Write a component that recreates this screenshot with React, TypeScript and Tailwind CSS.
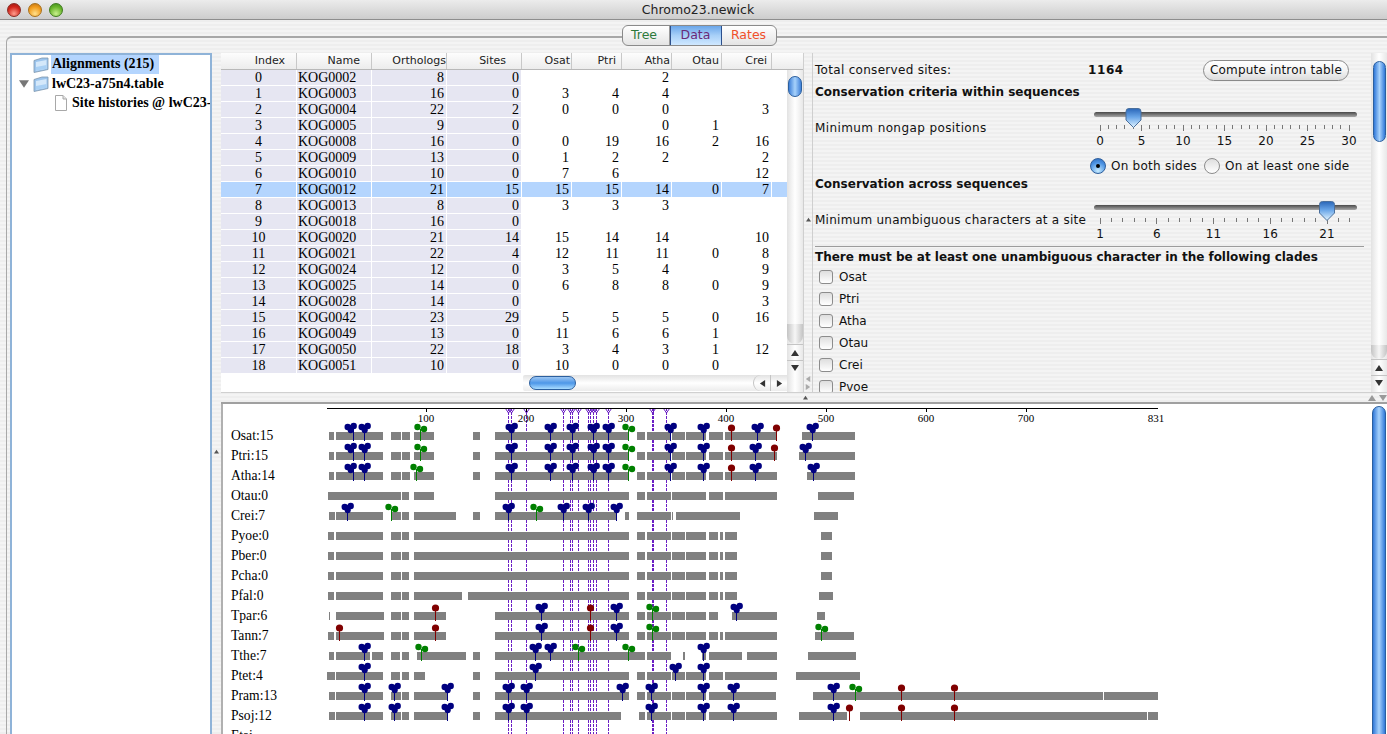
import React from 'react';

// ─── Data ─────────────────────────────────────────────────────────────────────

const TABLE_ROWS: (string | number)[][] = [
  [0, 'KOG0002', 8, 0, '', '', 2, '', ''],
  [1, 'KOG0003', 16, 0, 3, 4, 4, '', ''],
  [2, 'KOG0004', 22, 2, 0, 0, 0, '', 3],
  [3, 'KOG0005', 9, 0, '', '', 0, 1, ''],
  [4, 'KOG0008', 16, 0, 0, 19, 16, 2, 16],
  [5, 'KOG0009', 13, 0, 1, 2, 2, '', 2],
  [6, 'KOG0010', 10, 0, 7, 6, '', '', 12],
  [7, 'KOG0012', 21, 15, 15, 15, 14, 0, 7],
  [8, 'KOG0013', 8, 0, 3, 3, 3, '', ''],
  [9, 'KOG0018', 16, 0, '', '', '', '', ''],
  [10, 'KOG0020', 21, 14, 15, 14, 14, '', 10],
  [11, 'KOG0021', 22, 4, 12, 11, 11, 0, 8],
  [12, 'KOG0024', 12, 0, 3, 5, 4, '', 9],
  [13, 'KOG0025', 14, 0, 6, 8, 8, 0, 9],
  [14, 'KOG0028', 14, 0, '', '', '', '', 3],
  [15, 'KOG0042', 23, 29, 5, 5, 5, 0, 16],
  [16, 'KOG0049', 13, 0, 11, 6, 6, 1, ''],
  [17, 'KOG0050', 22, 18, 3, 4, 3, 1, 12],
  [18, 'KOG0051', 10, 0, 10, 0, 0, 0, ''],
];

const COLUMNS = [
  { label: 'Index', width: 'w-[76px]', head: 'pr-[11px]', cell: 'text-center' },
  { label: 'Name', width: 'w-[75px]', head: 'pr-[11px]', cell: 'text-left pl-[1px]' },
  { label: 'Orthologs', width: 'w-[75px]', head: 'pr-[0px]', cell: 'text-right pr-[2px]' },
  { label: 'Sites', width: 'w-[75px]', head: 'pr-[15px]', cell: 'text-right pr-[2px]' },
  { label: 'Osat', width: 'w-[50px]', head: 'pr-[1px]', cell: 'text-right pr-[2px]' },
  { label: 'Ptri', width: 'w-[50px]', head: 'pr-[5px]', cell: 'text-right pr-[2px]' },
  { label: 'Atha', width: 'w-[50px]', head: 'pr-[1px]', cell: 'text-right pr-[2px]' },
  { label: 'Otau', width: 'w-[50px]', head: 'pr-[2px]', cell: 'text-right pr-[2px]' },
  { label: 'Crei', width: 'w-[50px]', head: 'pr-[4px]', cell: 'text-right pr-[2px]' },
];

type Seg = [number, number];
// kind, stem x, optional head offset
type Pin = ['n' | 'g' | 'r', number, number?];

const HEAD: Seg[] = [[329, 334], [336, 383], [391, 401], [402, 410]];
const HEAD_P: Seg[] = [[328, 334], [336, 383], [391, 401], [402, 409]];
const MID: Seg[] = [[637, 645], [647, 671], [672, 685], [686, 706]];
const OSAT_PINS: Pin[] = [['n', 353, -3], ['n', 364], ['g', 420.5], ['n', 511], ['n', 550], ['n', 572], ['n', 593], ['n', 608], ['g', 628], ['n', 670], ['n', 703], ['r', 731]];

const TRACKS: { label: string; segs: Seg[]; pins: Pin[] }[] = [
  {
    label: 'Osat:15',
    segs: [...HEAD, [414, 434], [473, 480], [495, 629], ...MID, [709, 723], [725, 777], [802, 855]],
    pins: [...OSAT_PINS, ['n', 757], ['r', 776], ['n', 812]],
  },
  {
    label: 'Ptri:15',
    segs: [...HEAD, [414, 434], [473, 480], [495, 629], ...MID, [709, 723], [725, 777], [799, 855]],
    pins: [...OSAT_PINS, ['n', 755], ['r', 774], ['n', 805]],
  },
  {
    label: 'Atha:14',
    segs: [...HEAD, [414, 434], [473, 480], [495, 629], ...MID, [709, 723], [725, 777], [807, 855]],
    pins: [['n', 353, -3], ['n', 364], ['g', 416], ['n', 511], ['n', 550], ['n', 572], ['n', 593], ['n', 608], ['g', 628], ['n', 670], ['n', 703], ['r', 731], ['n', 755], ['n', 813]],
  },
  {
    label: 'Otau:0',
    segs: [[328, 401], [402, 409], [414, 434], [495, 629], [637, 645], [647, 671], [672, 706], [709, 723], [725, 777], [818, 854]],
    pins: [],
  },
  {
    label: 'Crei:7',
    segs: [[329, 335], [336, 383], [391, 401], [402, 409], [414, 456], [473, 480], [495, 616], [625, 629], [637, 671], [672, 673], [676, 740], [814, 838]],
    pins: [['n', 347], ['g', 391], ['n', 508], ['g', 536], ['n', 563], ['n', 588], ['n', 616]],
  },
  { label: 'Pyoe:0', segs: [...HEAD_P, [414, 629], ...MID, [709, 718], [720, 723], [725, 737], [821, 832]], pins: [] },
  { label: 'Pber:0', segs: [...HEAD_P, [414, 629], ...MID, [709, 718], [720, 723], [725, 737], [821, 832]], pins: [] },
  { label: 'Pcha:0', segs: [...HEAD_P, [414, 629], ...MID, [709, 718], [720, 723], [725, 737], [821, 832]], pins: [] },
  { label: 'Pfal:0', segs: [...HEAD_P, [414, 462], [468, 629], ...MID, [709, 718], [720, 723], [725, 737], [819, 833]], pins: [] },
  {
    label: 'Tpar:6',
    segs: [[329, 330], [336, 384], [391, 401], [402, 409], [414, 446], [495, 629], ...MID, [709, 718], [732, 777], [817, 825]],
    pins: [['r', 435], ['n', 541], ['r', 590], ['n', 616], ['g', 652], ['n', 736]],
  },
  {
    label: 'Tann:7',
    segs: [[328, 334], [336, 384], [391, 401], [402, 409], [414, 446], [495, 629], ...MID, [709, 718], [720, 723], [725, 777], [815, 854]],
    pins: [['r', 339], ['r', 435], ['n', 541], ['r', 590], ['n', 616], ['g', 652], ['g', 821]],
  },
  {
    label: 'Tthe:7',
    segs: [[329, 334], [336, 370], [372, 383], [391, 400], [402, 409], [417, 466], [473, 480], [495, 645], [647, 671], [683, 685], [702, 706], [709, 742], [747, 777], [808, 856]],
    pins: [['n', 364], ['g', 421], ['n', 535], ['n', 550], ['g', 578], ['g', 628], ['n', 703]],
  },
  {
    label: 'Ptet:4',
    segs: [[327, 335], [336, 383], [391, 400], [402, 409], [414, 425], [473, 480], [495, 629], ...MID, [709, 723], [725, 777], [796, 860]],
    pins: [['n', 364], ['n', 535], ['n', 675], ['n', 703]],
  },
  {
    label: 'Pram:13',
    segs: [[329, 335], [336, 383], [391, 401], [402, 409], [414, 447], [473, 480], [495, 629], ...MID, [709, 776], [813, 1103], [1104, 1158]],
    pins: [['n', 364], ['n', 394], ['n', 447], ['n', 508], ['n', 526], ['n', 622], ['n', 651], ['n', 703], ['n', 733], ['n', 833], ['g', 855], ['r', 901], ['r', 954]],
  },
  {
    label: 'Psoj:12',
    segs: [[329, 335], [336, 383], [391, 401], [402, 409], [414, 447], [473, 480], [495, 621], [639, 645], [647, 671], [672, 685], [686, 706], [709, 777], [799, 847], [860, 1147], [1148, 1158]],
    pins: [['n', 364], ['n', 394], ['n', 447], ['n', 508], ['n', 526], ['n', 651], ['n', 703], ['n', 733], ['n', 833], ['r', 849], ['r', 901], ['r', 954]],
  },
];

const SITE_LINES = [508, 511, 526, 563, 570, 572, 578, 588, 590, 593, 596, 608, 652, 666];
const AXIS_TICKS = [100, 200, 300, 400, 500, 600, 700];

const CLADES = ['Osat', 'Ptri', 'Atha', 'Otau', 'Crei', 'Pvoe'];

// ─── Small drawings ───────────────────────────────────────────────────────────

function Folder({ className }: { className?: string }) {
  return (
    <svg viewBox="0 0 16 16" className={className}>
      <path d="M1 3.5 L9 1 L15 1 L15 12.5 L1 15.5 Z" fill="#9cc4ec" stroke="#7d97ad" strokeWidth="0.8" />
      <path d="M3 5 L13.5 3 L13.5 11.8 L3 13.8 Z" fill="#d4e8fa" />
      <path d="M3 10 L13.5 8 L13.5 11.8 L3 13.8 Z" fill="#a9d0f4" />
    </svg>
  );
}

function DocIcon({ className }: { className?: string }) {
  return (
    <svg viewBox="0 0 12 16" className={className}>
      <path d="M0.5 0.5 H8 L11.5 4 V15.5 H0.5 Z" fill="#fff" stroke="#a8a8a8" />
      <path d="M8 0.5 V4 H11.5" fill="#e4e4e4" stroke="#a8a8a8" />
    </svg>
  );
}

function Arrow({ dir, className }: { dir: 'up' | 'down' | 'left' | 'right'; className?: string }) {
  const pts = { up: '4,1 8,7 0,7', down: '0,1 8,1 4,7', left: '7,0 7,8 1,4', right: '1,0 1,8 7,4' }[dir];
  return (
    <svg viewBox="0 0 8 8" className={className}>
      <polygon points={pts} fill="currentColor" />
    </svg>
  );
}

function SliderDrawing({ thumb, labels, ticks }: { thumb: number; labels: { x: number; t: string }[]; ticks: { x: number; major: boolean }[] }) {
  const gradId = `sliderThumb${Math.round(thumb)}`;
  return (
    <svg viewBox="1090 0 274 48" className="w-[274px] h-[48px] block shrink-0">
      <defs>
        <linearGradient id={gradId} x1="0" y1="0" x2="0" y2="1">
          <stop offset="0" stopColor="#2a66b8" />
          <stop offset="0.45" stopColor="#6aa6e8" />
          <stop offset="1" stopColor="#e2f4ff" />
        </linearGradient>
        <linearGradient id={`${gradId}t`} x1="0" y1="0" x2="0" y2="1">
          <stop offset="0" stopColor="#4a4a4a" />
          <stop offset="1" stopColor="#a8a8a8" />
        </linearGradient>
      </defs>
      <rect x="1094" y="10" width="263" height="5" rx="2.5" fill={`url(#${gradId}t)`} />
      {ticks.map((t) => (
        <line key={t.x} x1={t.x} x2={t.x} y1="22.5" y2={t.major ? 29 : 26.5} stroke="#777" strokeWidth="1" shapeRendering="crispEdges" />
      ))}
      <path
        d={`M${thumb - 7.5} 9.5 Q${thumb - 7.5} 6.5 ${thumb - 4.5} 6.5 H${thumb + 4.5} Q${thumb + 7.5} 6.5 ${thumb + 7.5} 9.5 V18 L${thumb} 25.5 L${thumb - 7.5} 18 Z`}
        fill={`url(#${gradId})`}
        stroke="#4a6f9c"
      />
      {labels.map((l) => (
        <text key={l.t} x={l.x} y="43" textAnchor="middle" fontSize="12" fill="#111" fontFamily="'DejaVu Sans', sans-serif">
          {l.t}
        </text>
      ))}
    </svg>
  );
}

function Pinhead({ pin, y }: { pin: Pin; y: number }) {
  const [kind, x0, dx = 0] = pin;
  const x = Math.floor(x0) + 0.5;
  const hx = x + dx;
  const color = kind === 'n' ? '#000080' : kind === 'g' ? '#008000' : '#800000';
  return (
    <g fill={color}>
      <line x1={x} x2={x} y1={y - 3} y2={y + 9} stroke={color} strokeWidth="1" shapeRendering="crispEdges" />
      {kind === 'n' && (
        <>
          <circle cx={hx - 2.8} cy={y - 5} r="3.2" />
          <circle cx={hx + 3.2} cy={y - 6} r="3.2" />
          <circle cx={hx + 0.2} cy={y - 4} r="3" />
          <circle cx={hx + 0.2} cy={y - 1.8} r="3" />
        </>
      )}
      {kind === 'g' && (
        <>
          <circle cx={x - 3} cy={y - 5} r="3.2" />
          <circle cx={x + 3.5} cy={y - 3} r="3.2" />
        </>
      )}
      {kind === 'r' && <circle cx={x} cy={y - 4} r="3.6" />}
    </g>
  );
}

// ─── Chart ────────────────────────────────────────────────────────────────────

function IntronChart() {
  return (
    <svg viewBox="223 404 1148 330" className="w-[1148px] h-[330px] block bg-white" fontFamily="'Liberation Serif', serif">
      {SITE_LINES.map((x) => (
        <g key={x} stroke="#6a1fc4" fill="none" shapeRendering="crispEdges">
          <line x1={x + 0.5} x2={x + 0.5} y1="408" y2="734" strokeWidth={x === 652 ? 2 : 1} strokeDasharray="3 1" />
          <polygon points={`${x - 2.5},408.5 ${x + 3.5},408.5 ${x + 0.5},413`} shapeRendering="auto" />
        </g>
      ))}
      <line x1="327" x2="1158" y1="408.5" y2="408.5" stroke="#000" shapeRendering="crispEdges" />
      {AXIS_TICKS.map((t) => (
        <g key={t}>
          <line x1={326.5 + t} x2={326.5 + t} y1="408" y2="412" stroke="#000" shapeRendering="crispEdges" />
          <text x={326 + t} y="422" textAnchor="middle" fontSize="11" fill="#000">{t}</text>
        </g>
      ))}
      <text x="1156" y="422" textAnchor="middle" fontSize="11" fill="#000">831</text>
      {TRACKS.map((tr, i) => {
        const y = 432 + i * 20;
        return (
          <g key={tr.label}>
            <text x="231" y={y + 8} fontSize="13.6" fill="#000">{tr.label}</text>
            {tr.segs.map(([a, b]) => (
              <rect key={a} x={a} y={y} width={b - a} height="8" fill="#808080" shapeRendering="crispEdges" />
            ))}
            {tr.pins.map((p) => (
              <Pinhead key={p[1]} pin={p} y={y} />
            ))}
          </g>
        );
      })}
      <text x="231" y="740" fontSize="13.6" fill="#000">Etai</text>
    </svg>
  );
}

// ─── Panels ───────────────────────────────────────────────────────────────────

function ScrollArrows({ pill }: { pill: string }) {
  return (
    <>
      <div className="flex-1" />
      <div className={`${pill} rounded-b-full bg-gradient-to-r from-[#c4c4c4] via-[#f6f6f6] to-[#c4c4c4]`} />
      <div className="h-[16px] flex items-center justify-center border-t border-[#c4c4c4] text-[#333]">
        <Arrow dir="up" className="w-[8px] h-[8px]" />
      </div>
      <div className="h-[15px] flex items-center justify-center border-t border-[#c4c4c4] text-[#333]">
        <Arrow dir="down" className="w-[8px] h-[8px]" />
      </div>
    </>
  );
}

function SiteTable() {
  return (
    <div className="w-[582px] shrink-0 bg-white flex flex-col overflow-hidden">
      <div className="flex h-[17px] shrink-0 border-b border-[#b8b8b8] bg-gradient-to-b from-[#fdfdfd] to-[#ececec] font-['DejaVu_Sans',sans-serif] text-[11px] leading-[16px] text-[#222]">
        {COLUMNS.map((c) => (
          <div key={c.label} className={`${c.width} ${c.head} shrink-0 text-right border-r border-[#c8c8c8] overflow-hidden`}>
            {c.label}
          </div>
        ))}
      </div>
      <div className="flex flex-1 min-h-0">
        <div className="w-[566px] shrink-0 flex flex-col">
          {TABLE_ROWS.map((row, i) => (
            <div key={i} className={`flex h-[16px] shrink-0 border-b border-white font-['Liberation_Serif',serif] text-[14px] leading-[15px] text-black ${i === 7 ? 'bg-[#b4d5fe]' : ''}`}>
              {COLUMNS.map((c, j) => (
                <div
                  key={c.label}
                  className={`${c.width} ${c.cell} shrink-0 border-r border-white ${j < 4 && i !== 7 ? 'bg-[#e6e6f2]' : ''}`}
                >
                  {row[j]}
                </div>
              ))}
            </div>
          ))}
          {/* Horizontal scrollbar */}
          <div className="flex h-[16px] mt-[1px] pl-[302px]">
            <div className="flex-1 flex items-center bg-gradient-to-b from-[#e2e2e2] via-white to-[#ececec] rounded-l-[2px]">
              <div className="ml-[6px] w-[47px] h-[14px] rounded-full border border-[#2b5f9e] bg-gradient-to-b from-[#9cc6f2] via-[#4d97e8] to-[#a9dcff]" />
              <div className="flex-1" />
              <div className="w-[17px] h-full flex items-center justify-center border-l border-[#c4c4c4] rounded-l-full text-[#333]">
                <Arrow dir="left" className="w-[7px] h-[7px]" />
              </div>
              <div className="w-[17px] h-full flex items-center justify-center border-l border-[#c4c4c4] text-[#333]">
                <Arrow dir="right" className="w-[7px] h-[7px]" />
              </div>
            </div>
          </div>
        </div>
        {/* Vertical scrollbar */}
        <div className="w-[16px] shrink-0 flex flex-col bg-gradient-to-r from-[#e2e2e2] via-white to-[#e8e8e8] pb-[17px] pt-[6px]">
          <div className="mx-[1px] h-[21px] rounded-full border border-[#2b5f9e] bg-gradient-to-r from-[#3e80d8] via-[#a7d2fb] to-[#3e80d8]" />
          <ScrollArrows pill="h-[20px]" />
        </div>
      </div>
    </div>
  );
}

const FORM_TEXT = "font-['DejaVu_Sans',sans-serif] text-[12px] text-[#111]";

function Radio({ on }: { on?: boolean }) {
  return on ? (
    <span className="w-[16px] h-[16px] rounded-full border border-[#2f5f9c] bg-[radial-gradient(circle_at_50%_85%,#c8ecff,#4d94e4_60%,#2a66b8)] flex items-center justify-center shrink-0">
      <span className="w-[4px] h-[4px] rounded-full bg-black" />
    </span>
  ) : (
    <span className="ml-[2px] w-[16px] h-[16px] rounded-full border border-[#8c8c8c] bg-gradient-to-b from-[#dedede] to-white shrink-0" />
  );
}

function ConservationForm() {
  const ticks1 = Array.from({ length: 31 }, (_, i) => ({ x: 1100 + i * 8.3, major: i % 5 === 0 }));
  const ticks2 = Array.from({ length: 23 }, (_, i) => ({ x: 1100 + i * 11.35, major: i % 5 === 0 }));
  const labels1 = [0, 5, 10, 15, 20, 25, 30].map((v) => ({ x: 1100 + v * 8.3, t: String(v) }));
  const labels2 = [1, 6, 11, 16, 21].map((v) => ({ x: 1100 + (v - 1) * 11.35, t: String(v) }));

  return (
    <div className={`w-[551px] shrink-0 flex flex-col overflow-hidden pl-[2px] ${FORM_TEXT}`}>
      <div className="flex items-center h-[24px] mt-[5px] shrink-0">
        <span className="w-[273px] shrink-0 tracking-[0.3px]">Total conserved sites:</span>
        <span className="font-bold text-[12px] tracking-[0.6px]">1164</span>
        <button className="ml-auto mr-[15px] w-[146px] h-[21px] rounded-full border border-[#8a8a8a] bg-gradient-to-b from-white via-[#f4f4f4] to-[#dcdcdc] text-[12px] leading-[18px] tracking-[0.2px]">
          Compute intron table
        </button>
      </div>
      <div className="h-[16px] mt-[2px] leading-[16px] font-bold text-[12px] whitespace-nowrap">Conservation criteria within sequences</div>
      <div className="flex items-start h-[48px] shrink-0 mt-[2px]">
        <span className="w-[275px] shrink-0 pt-[17px] tracking-[0.4px]">Minimum nongap positions</span>
        <SliderDrawing thumb={1133.5} ticks={ticks1} labels={labels1} />
      </div>
      <div className="flex items-center h-[20px] mt-[6px] pl-[275px] shrink-0 gap-[5px]">
        <Radio on />
        <span className="tracking-[0.25px]">On both sides</span>
        <Radio />
        <span className="tracking-[0.2px]">On at least one side</span>
      </div>
      <div className="h-[16px] leading-[16px] mt-[0px] font-bold text-[12px] tracking-[0px]">Conservation across sequences</div>
      <div className="flex items-start h-[48px] shrink-0 mt-[3px]">
        <span className="w-[275px] shrink-0 pt-[16px] tracking-[0.25px] whitespace-nowrap">Minimum unambiguous characters at a site</span>
        <SliderDrawing thumb={1327} ticks={ticks2} labels={labels2} />
      </div>
      <div className="mt-[3px] border-t border-[#9c9c9c]" />
      <div className="h-[18px] leading-[18px] mt-[1px] font-bold text-[12px] tracking-[-0.02px] whitespace-nowrap">
        There must be at least one unambiguous character in the following clades
      </div>
      <div className="flex flex-col pl-[4px]">
        {CLADES.map((c) => (
          <div key={c} className="flex items-center h-[22px] shrink-0 gap-[6px]">
            <span className="w-[14px] h-[14px] rounded-[3px] border border-[#8c8c8c] bg-gradient-to-b from-[#dedede] to-white shrink-0" />
            <span>{c}</span>
          </div>
        ))}
      </div>
    </div>
  );
}

// ─── App ──────────────────────────────────────────────────────────────────────

const STRIPES = 'bg-[repeating-linear-gradient(180deg,#eeeeee_0px,#eeeeee_2px,#f4f4f4_2px,#f4f4f4_4px)]';

export default function App() {
  return (
    <div className="w-[1387px] h-[734px] overflow-hidden flex flex-col bg-[#efefef]">
      {/* Title bar */}
      <div className="h-[20px] shrink-0 grid grid-cols-[1fr_auto_1fr] items-center border-b border-[#8e8e8e] bg-gradient-to-b from-[#ececec] to-[#cdcdcd]">
        <div className="flex items-center gap-[7px] pl-[7px]">
          <span className="w-[14px] h-[14px] rounded-full border border-[#8a2a22] bg-[radial-gradient(circle_at_50%_80%,#ff9c8c,#d0241a_60%,#9c1c14)]" />
          <span className="w-[14px] h-[14px] rounded-full border border-[#a8701a] bg-[radial-gradient(circle_at_50%_80%,#ffe08c,#f09a1a_60%,#b8701a)]" />
          <span className="w-[14px] h-[14px] rounded-full border border-[#3f7a1e] bg-[radial-gradient(circle_at_50%_80%,#c8f08c,#68b42a_60%,#3f8a1e)]" />
        </div>
        <div className="pl-[9px] font-['DejaVu_Sans',sans-serif] text-[12.5px] leading-[18px] text-[#222]">Chromo23.newick</div>
        <div />
      </div>

      <div className={`flex-1 min-h-0 flex flex-col ${STRIPES}`}>
        {/* Segmented tabs */}
        <div className="relative z-10 h-[21px] mt-[5px] -mb-[10px] shrink-0 flex justify-center pl-[11px]">
          <div className="flex w-[155px] rounded-[6px] border border-[#8a8a8a] overflow-hidden bg-gradient-to-b from-white to-[#e4e4e4] font-['DejaVu_Sans',sans-serif] text-[12.5px] leading-[18px] text-center">
            <div className="w-[47px] pr-[3px] text-[#2d7a3a] border-r border-[#9a9a9a]">Tree</div>
            <div className="w-[52px] text-[#6a2a78] border-x border-[#2c4f8c] bg-gradient-to-b from-[#6aa6ea] via-[#a8d0f8] to-[#cfe8ff]">Data</div>
            <div className="flex-1 text-[#f0502a]">Rates</div>
          </div>
        </div>

        {/* Main panel */}
        <div className="flex-1 min-h-0 ml-[6px] flex flex-col border-l border-t-2 border-[#a8a8a8] rounded-tl-[6px] pt-[15px] pl-[3px]">
          <div className="flex-1 min-h-0 flex">
            {/* Tree */}
            <div className="w-[202px] shrink-0 bg-white border-2 border-b-0 border-[#8fb3d8] font-['Liberation_Serif',serif] font-bold text-[14px] text-black overflow-hidden whitespace-nowrap">
              <div className="h-[19px] flex items-center">
                <Folder className="ml-[21px] w-[16px] h-[16px] shrink-0" />
                <span className="ml-[2px] px-[1px] h-[19px] leading-[18px] w-[108px] bg-[#b4d5fe]">Alignments (215)</span>
              </div>
              <div className="h-[19px] flex items-center">
                <Arrow dir="down" className="ml-[7px] w-[10px] h-[10px] text-[#777] shrink-0" />
                <Folder className="ml-[4px] w-[16px] h-[16px] shrink-0" />
                <span className="ml-[3px]">lwC23-a75n4.table</span>
              </div>
              <div className="h-[19px] flex items-center">
                <DocIcon className="ml-[43px] w-[12px] h-[16px] shrink-0" />
                <span className="ml-[5px]">Site histories @ lwC23-a75n4</span>
              </div>
            </div>

            {/* Left splitter */}
            <div className="w-[9px] shrink-0 flex items-center justify-center text-[#555]">
              <Arrow dir="up" className="w-[5px] h-[5px] mt-[116px]" />
            </div>

            {/* Right column */}
            <div className="flex-1 min-w-0 flex flex-col">
              <div className="h-[339px] shrink-0 flex">
                <SiteTable />
                <div className="w-[10px] shrink-0 border-x border-[#cfcfcf] flex flex-col items-center text-[#aaa] pb-[2px] gap-[2px]">
                  <div className="flex-1" />
                  <Arrow dir="up" className="w-[5px] h-[5px] mt-[12px] text-[#555]" />
                  <div className="flex-1" />
                  <Arrow dir="left" className="w-[6px] h-[6px]" />
                  <Arrow dir="right" className="w-[6px] h-[6px]" />
                </div>
                <ConservationForm />
                <div className="w-[7px] shrink-0" />
                {/* Form scrollbar */}
                <div className="w-[16px] shrink-0 flex flex-col bg-gradient-to-r from-[#e2e2e2] via-white to-[#e8e8e8] pb-[2px] pt-[8px]">
                  <div className="ml-[2px] mr-[1px] h-[81px] rounded-full border border-[#2b5f9e] bg-gradient-to-r from-[#2f78d8] via-[#a7d2fb] to-[#2f78d8]" />
                  <ScrollArrows pill="h-[14px]" />
                </div>
              </div>

              {/* Horizontal splitter */}
              <div className="h-[12px] shrink-0 border-t border-[#d0d0d0] border-b-2 border-b-[#a0a0a0] flex items-center text-[#9a9a9a]">
                <Arrow dir="up" className="ml-[582px] w-[5px] h-[5px] text-[#555]" />
                <div className="flex-1" />
                <Arrow dir="up" className="w-[8px] h-[8px] mr-[3px]" />
                <Arrow dir="down" className="w-[8px] h-[8px]" />
              </div>

              {/* Chart + scrollbar */}
              <div className="flex-1 min-h-0 flex border-l-2 border-[#b0b0b0]">
                <div className="flex-1 min-w-0 bg-white overflow-hidden">
                  <IntronChart />
                </div>
                <div className="w-[16px] shrink-0 bg-white pt-[2px]">
                  <div className="mx-[1px] h-[340px] rounded-t-full border border-[#2b5f9e] bg-gradient-to-r from-[#2f78d8] via-[#a7d2fb] to-[#2f78d8]" />
                </div>
              </div>
            </div>
          </div>
        </div>
      </div>
    </div>
  );
}
